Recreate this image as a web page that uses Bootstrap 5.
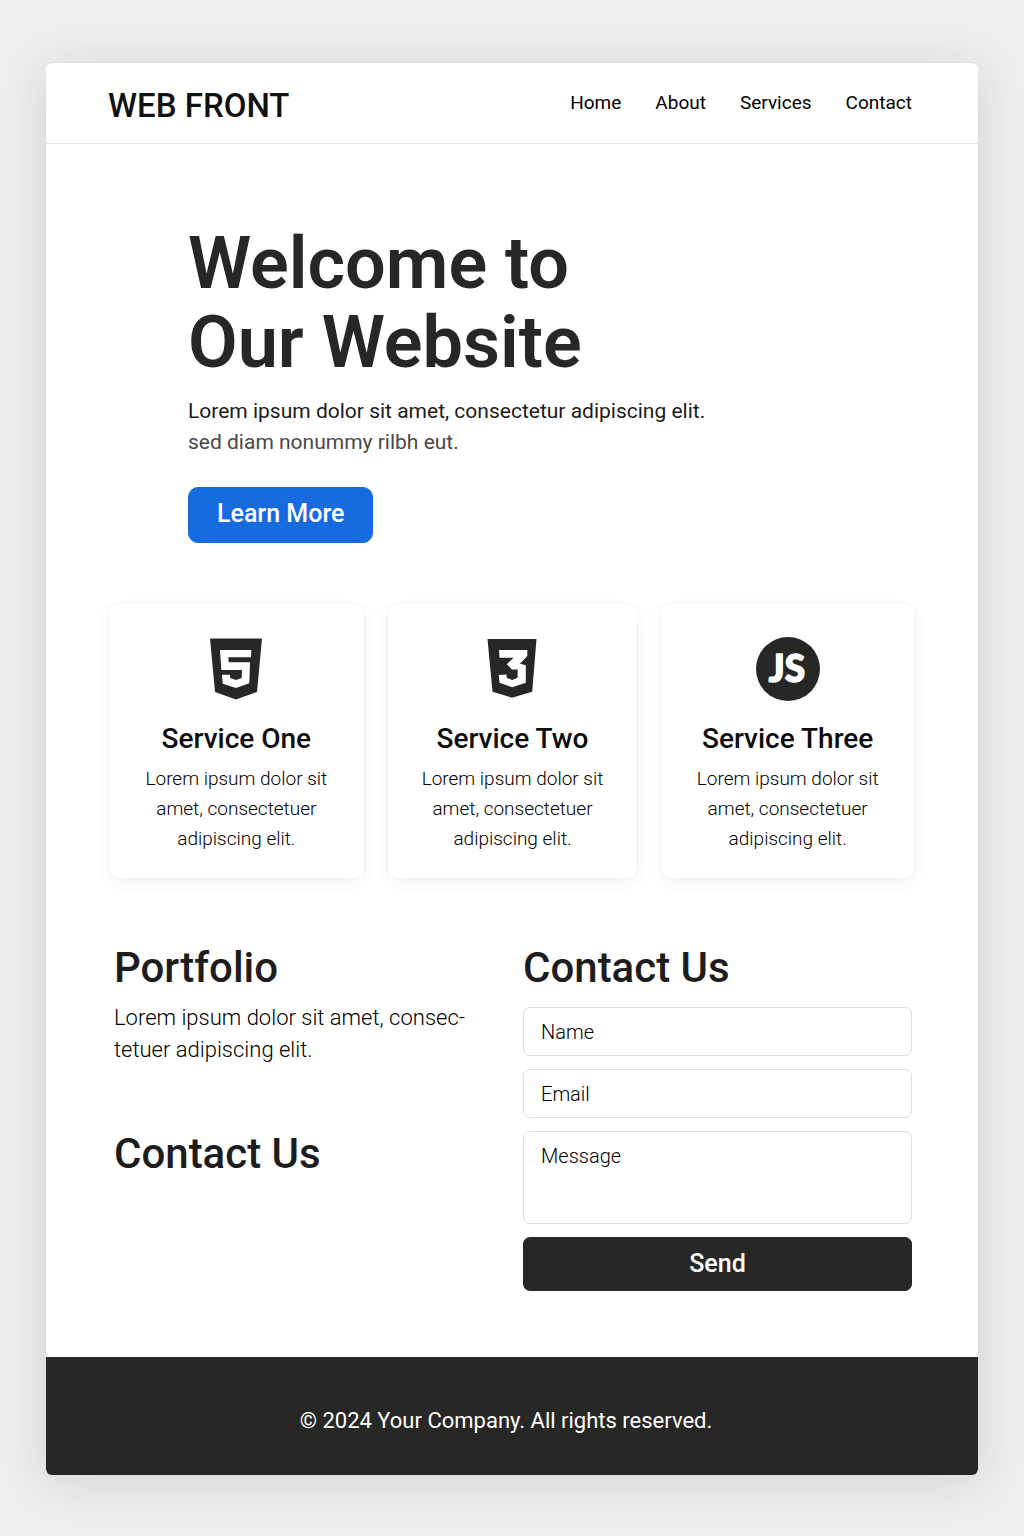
<!DOCTYPE html>
<html lang="en">
<head>
<meta charset="utf-8">
<meta name="viewport" content="width=device-width, initial-scale=1">
<title>Web Front</title>
<link href="https://cdn.jsdelivr.net/npm/bootstrap@5.3.0/dist/css/bootstrap.min.css" rel="stylesheet">
<style>
  :root { --ink: #272726; }
  body { background: #efeeed; font-family: Roboto, "Liberation Sans", sans-serif; color: #1b1b1b; padding: 63px 46px 61px; }
  .sheet { background: #fff; border-radius: 6px; overflow: hidden; box-shadow: 0 6px 50px rgba(30, 30, 40, .13), 0 0 2px rgba(0, 0, 0, .05); }
  .site-bar { padding: 0 66px 0 62px; min-height: 81px; border-bottom: 1px solid #e4e4e4; }
  .site-bar .navbar-brand { font-size: 33px; font-weight: 500; line-height: 38px; color: #111; padding: 6px 0 0; margin: 0; }
  .site-bar .navbar-nav { gap: 34px; }
  .site-bar .navbar-nav .nav-link { font-size: 19px; line-height: 24px; color: #000; padding: 0; }
  .hero { padding: 80px 142px 61px; }
  .hero h1 { font-size: 72px; line-height: 79px; font-weight: 600; color: var(--ink); margin: 0 0 14px; }
  .hero p { font-size: 21px; line-height: 31px; margin: 0 0 29px; }
  .hero .soft { color: #484848; }
  .btn-learn { --bs-btn-bg: #166cdf; --bs-btn-border-color: #166cdf; --bs-btn-hover-bg: #0f5dc6; --bs-btn-color: #fff; --bs-btn-hover-color: #fff; font-size: 25px; line-height: 30px; font-weight: 500; padding: 11px 28px 13px; border-radius: 10px; }
  .services { display: grid; grid-template-columns: 255fr 250fr 253fr; gap: 24px; padding: 0 64px 0 63px; }
  .service { border: 0; border-radius: 10px; padding: 33px 24px 24px; text-align: center; box-shadow: 0 5px 18px rgba(0, 0, 0, .06), 0 0 3px rgba(0, 0, 0, .05); }
  .service svg { width: 64px; height: 64px; margin: 0 auto 20px; }
  .service h2 { font-size: 28px; line-height: 36px; font-weight: 500; color: #0c0c0c; margin: 0 0 7px; }
  .service p { font-size: 19px; line-height: 30px; font-weight: 300; color: #000; margin: 0 auto; max-width: 184px; }
  .lower { padding: 65px 66px 66px 68px; display: grid; grid-template-columns: 1fr 1fr; gap: 20px; }
  .lower h2 { font-size: 42px; line-height: 50px; font-weight: 500; color: #1d1d1d; margin: 0; }
  .lower p { font-size: 22px; line-height: 32px; font-weight: 300; color: #000; margin: 9px 0 63px; }
  .contact-form { display: grid; gap: 13px; margin-top: 14px; }
  .contact-form .form-control { font-size: 20px; line-height: 24px; font-weight: 300; height: 49px; min-height: 49px; padding: 12px 17px 11px; border: 1px solid #dcdcdc; border-radius: 7px; color: #000; resize: none; }
  .contact-form textarea.form-control { height: 93px; }
  .contact-form .form-floating > label { font-size: 20px; line-height: 24px; font-weight: 300; padding: 12px 17px 11px; color: #000; }
  .btn-send { --bs-btn-bg: var(--ink); --bs-btn-border-color: var(--ink); --bs-btn-color: #fff; --bs-btn-hover-bg: #3a3a39; --bs-btn-hover-color: #fff; font-size: 25px; line-height: 30px; font-weight: 500; padding: 11px; border-radius: 7px; }
  .site-foot { background: var(--ink); color: #fff; font-size: 22px; line-height: 32px; padding: 48px 12px 38px 0; }
</style>
</head>
<body>
<div class="sheet">
  <header>
    <nav class="site-bar navbar navbar-expand">
      <a class="navbar-brand" href="#">WEB FRONT</a>
      <ul class="navbar-nav ms-auto">
        <li class="nav-item"><a class="nav-link" href="#home">Home</a></li>
        <li class="nav-item"><a class="nav-link" href="#about">About</a></li>
        <li class="nav-item"><a class="nav-link" href="#services">Services</a></li>
        <li class="nav-item"><a class="nav-link" href="#contact">Contact</a></li>
      </ul>
    </nav>
  </header>
  <main>
    <section class="hero" id="home">
      <h1>Welcome to<br>Our Website</h1>
      <p>Lorem ipsum dolor sit amet, consectetur adipiscing elit.<br><span class="soft">sed diam nonummy rilbh eut.</span></p>
      <button type="button" class="btn btn-learn">Learn More</button>
    </section>

    <section class="services" id="services">
      <article class="card service">
        <svg viewBox="0 0 64 64" aria-hidden="true">
          <path fill="#272726" d="M6 1.5H58L53 55 32 62.5 11 55Z"/>
          <path fill="#fff" d="M16 13H47.3L47 20.3H24.3L24.7 25.3H46L45.3 46.3 32 51 18.7 46.7 18 37.7H26L26.3 41 32 43 37.7 41 38 33H17.3Z"/>
        </svg>
        <h2>Service One</h2>
        <p>Lorem ipsum dolor sit amet, consectetuer adipiscing elit.</p>
      </article>
      <article class="card service">
        <svg viewBox="0 0 64 64" aria-hidden="true">
          <path fill="#272726" d="M7.5 2H56.5L52.2 54.7 32 60.7 12.5 54.7Z"/>
          <path fill="#fff" d="M19 13H47.3V19L40 26.8 45.8 28.2V45.7L32.2 50.3 19.5 45.7 18.8 38 26.5 37.5 26.8 40.7 32.2 43 37.5 40.7 37.8 32.6H32L26.8 27.2 33.5 20.7H19.5Z"/>
        </svg>
        <h2>Service Two</h2>
        <p>Lorem ipsum dolor sit amet, consectetuer adipiscing elit.</p>
      </article>
      <article class="card service">
        <svg viewBox="0 0 64 64" role="img" aria-label="JS">
          <circle cx="32" cy="32" r="32" fill="#272726"/>
          <text x="31" y="45" text-anchor="middle" font-family="Lato, sans-serif" font-weight="900" font-size="37" fill="#fff" stroke="#fff" stroke-width="1.4" stroke-linejoin="round">JS</text>
        </svg>
        <h2>Service Three</h2>
        <p>Lorem ipsum dolor sit amet, consectetuer adipiscing elit.</p>
      </article>
    </section>

    <section class="lower">
      <div id="about">
        <h2>Portfolio</h2>
        <p>Lorem ipsum dolor sit amet, consec-<br>tetuer adipiscing elit.</p>
        <h2>Contact Us</h2>
      </div>
      <div id="contact">
        <h2>Contact Us</h2>
        <form class="contact-form">
          <div class="form-floating"><input class="form-control" id="f-name" type="text" placeholder=" "><label for="f-name">Name</label></div>
          <div class="form-floating"><input class="form-control" id="f-email" type="email" placeholder=" "><label for="f-email">Email</label></div>
          <div class="form-floating d-flex"><textarea class="form-control" id="f-msg" placeholder=" "></textarea><label for="f-msg">Message</label></div>
          <button type="submit" class="btn btn-send">Send</button>
        </form>
      </div>
    </section>
  </main>
  <footer class="site-foot text-center">© 2024 Your Company. All rights reserved.</footer>
</div>
<script src="https://cdn.jsdelivr.net/npm/bootstrap@5.3.0/dist/js/bootstrap.bundle.min.js"></script>
</body>
</html>
